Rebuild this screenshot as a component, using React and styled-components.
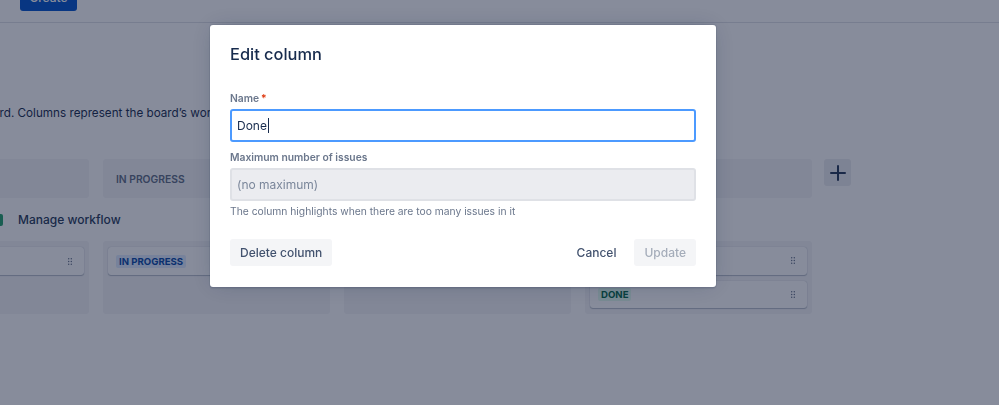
import React from "react";
import styled, { createGlobalStyle } from "styled-components";

const GlobalStyle = createGlobalStyle`
  * {
    box-sizing: border-box;
  }
  html, body {
    margin: 0;
    padding: 0;
    background: #ffffff;
    overflow: hidden;
  }
  body {
    font-family: Inter, "Noto Sans", "Liberation Sans", sans-serif;
    color: #172b4d;
    -webkit-font-smoothing: antialiased;
  }
`;

const Page = styled.div`
  position: relative;
  width: 999px;
  height: 405px;
  overflow: hidden;
`;

const TopBar = styled.header`
  display: flex;
  align-items: flex-end;
  height: 56px;
  margin-top: -33px;
  padding: 0 0 11px 20px;
  border-bottom: 1px solid #dfe1e6;
`;

const CreateButton = styled.button`
  width: 57px;
  height: 27px;
  border: none;
  border-radius: 3px;
  background: #0052cc;
  color: #ffffff;
  font: 500 12px Inter, "Noto Sans", sans-serif;
`;

const Board = styled.main`
  margin-left: -138px;
  padding-top: 82px;
`;

const Description = styled.p`
  margin: 0;
  font-size: 11.7px;
  line-height: 16px;
  white-space: nowrap;
  color: #172b4d;
`;

const HeaderRow = styled.div`
  display: flex;
  align-items: flex-start;
  gap: 14px;
  margin-top: 38px;
`;

const ColumnHeader = styled.div`
  display: flex;
  align-items: center;
  width: 227px;
  height: 39px;
  padding: 0 13px;
  border-radius: 3px;
  background: #f4f5f7;
  color: #5e6c84;
  font-size: 10.3px;
  font-weight: 600;
  text-transform: uppercase;
`;

const AddButton = styled.button`
  display: flex;
  align-items: center;
  justify-content: center;
  width: 27px;
  height: 27px;
  margin-left: -2px;
  padding: 0;
  border: none;
  border-radius: 3px;
  background: #ebecf0;
  color: #253858;
`;

const WorkflowRow = styled.div`
  display: flex;
  align-items: center;
  gap: 15px;
  height: 43px;
  padding-left: 129px;
`;

const Toggle = styled.span`
  width: 12px;
  height: 12px;
  border-radius: 2px;
  background: #22a06b;
`;

const WorkflowLink = styled.span`
  font-size: 12px;
  font-weight: 500;
  color: #253858;
`;

const BodyRow = styled.div`
  display: flex;
  gap: 14px;
`;

const ColumnBody = styled.div`
  display: flex;
  flex-direction: column;
  gap: 6px;
  width: 227px;
  height: 73px;
  padding: 6px 5px;
  border-radius: 3px;
  background: #f4f5f7;
`;

const Card = styled.div`
  display: flex;
  align-items: center;
  justify-content: space-between;
  height: 28px;
  padding: 0 12px 0 8px;
  border-radius: 3px;
  background: #ffffff;
  box-shadow: 0 1px 1px rgba(9, 30, 66, 0.25), 0 0 1px rgba(9, 30, 66, 0.31);
`;

const Lozenge = styled.span`
  height: 13px;
  padding: 0 3px;
  border-radius: 2px;
  background: ${(p) => p.$bg};
  color: ${(p) => p.$fg};
  font-size: 9.6px;
  font-weight: 700;
  line-height: 13px;
  text-transform: uppercase;
`;

const Blanket = styled.div`
  position: fixed;
  inset: 0;
  padding: 25px 0 0 210px;
  background: rgba(15, 25, 55, 0.5);
`;

const Dialog = styled.section`
  width: 506px;
  padding: 19px 20px 21px;
  border-radius: 3px;
  background: #ffffff;
  box-shadow: 0 0 0 1px rgba(9, 30, 66, 0.08), 0 2px 1px rgba(9, 30, 66, 0.08),
    0 0 20px -6px rgba(9, 30, 66, 0.31);
`;

const Title = styled.h2`
  margin: 0;
  font-size: 16.4px;
  font-weight: 500;
  line-height: 20px;
  color: #172b4d;
`;

const Form = styled.div`
  margin-top: 27px;
`;

const Field = styled.div`
  margin-top: ${(p) => (p.$first ? "0" : "8px")};
`;

const Label = styled.label`
  display: block;
  font-size: 10.3px;
  font-weight: 600;
  line-height: 14px;
  color: #6b778c;
`;

const Required = styled.span`
  margin-left: 2px;
  color: #de350b;
`;

const FieldInput = styled.div`
  display: flex;
  align-items: center;
  height: 33px;
  margin-top: 4px;
  padding: 0 5px;
  border: 2px solid ${(p) => (p.$disabled ? "#dfe1e6" : "#4c9aff")};
  border-radius: 3px;
  background: ${(p) => (p.$disabled ? "#ebecf0" : "#ffffff")};
  color: ${(p) => (p.$disabled ? "#7a869a" : "#172b4d")};
  font-size: 12px;
`;

const Caret = styled.span`
  width: 1px;
  height: 15px;
  margin-left: 1px;
  background: #172b4d;
`;

const Helper = styled.div`
  margin-top: 3px;
  font-size: 10.3px;
  line-height: 14px;
  color: #6b778c;
`;

const Footer = styled.div`
  display: flex;
  justify-content: space-between;
  margin-top: 21px;
`;

const Actions = styled.div`
  display: flex;
  gap: 8px;
`;

const Button = styled.button`
  height: 27px;
  padding: 0 10px;
  border: none;
  border-radius: 3px;
  background: ${(p) => (p.$subtle ? "transparent" : "#f4f5f7")};
  color: ${(p) => (p.$disabled ? "#a5adba" : "#42526e")};
  font: 500 12px Inter, "Noto Sans", sans-serif;
`;

const DragHandle = () => (
  <svg width="4" height="7" viewBox="0 0 4 7" fill="#5e6c84">
    {[0.7, 3.3].map((x) =>
      [0.7, 3.5, 6.3].map((y) => <circle key={`${x}-${y}`} cx={x} cy={y} r="0.7" />)
    )}
  </svg>
);

const PlusIcon = () => (
  <svg width="16" height="16" viewBox="0 0 16 16" stroke="currentColor" strokeWidth="2" strokeLinecap="round">
    <line x1="8" y1="1" x2="8" y2="15" />
    <line x1="1" y1="8" x2="15" y2="8" />
  </svg>
);

const blue = { $bg: "#deebff", $fg: "#0747a6" };
const green = { $bg: "#e3fcef", $fg: "#006644" };
const grey = { $bg: "#dfe1e6", $fg: "#42526e" };

const columns = [
  { name: "To do", statuses: [{ label: "To do", tone: grey }] },
  { name: "In progress", statuses: [{ label: "In progress", tone: blue }] },
  { name: "In review", statuses: [{ label: "In review", tone: blue }] },
  {
    name: "Done",
    statuses: [
      { label: "Closed", tone: green },
      { label: "Done", tone: green },
    ],
  },
];

export default function App() {
  return (
    <Page>
      <GlobalStyle />
      <TopBar>
        <CreateButton>Create</CreateButton>
      </TopBar>
      <Board>
        <Description>
          Edit columns of your board. Columns represent the board’s workflow statuses and the order issues move through them.
        </Description>
        <HeaderRow>
          {columns.map((c) => (
            <ColumnHeader key={c.name}>{c.name}</ColumnHeader>
          ))}
          <AddButton aria-label="Add column">
            <PlusIcon />
          </AddButton>
        </HeaderRow>
        <WorkflowRow>
          <Toggle />
          <WorkflowLink>Manage workflow</WorkflowLink>
        </WorkflowRow>
        <BodyRow>
          {columns.map((c) => (
            <ColumnBody key={c.name}>
              {c.statuses.map((s) => (
                <Card key={s.label}>
                  <Lozenge {...s.tone}>{s.label}</Lozenge>
                  <DragHandle />
                </Card>
              ))}
            </ColumnBody>
          ))}
        </BodyRow>
      </Board>

      <Blanket>
        <Dialog>
          <Title>Edit column</Title>
          <Form>
            <Field $first>
              <Label>
                Name<Required>*</Required>
              </Label>
              <FieldInput>
                Done
                <Caret />
              </FieldInput>
            </Field>
            <Field>
              <Label>Maximum number of issues</Label>
              <FieldInput $disabled>(no maximum)</FieldInput>
              <Helper>The column highlights when there are too many issues in it</Helper>
            </Field>
          </Form>
          <Footer>
            <Button>Delete column</Button>
            <Actions>
              <Button $subtle>Cancel</Button>
              <Button $disabled>Update</Button>
            </Actions>
          </Footer>
        </Dialog>
      </Blanket>
    </Page>
  );
}
